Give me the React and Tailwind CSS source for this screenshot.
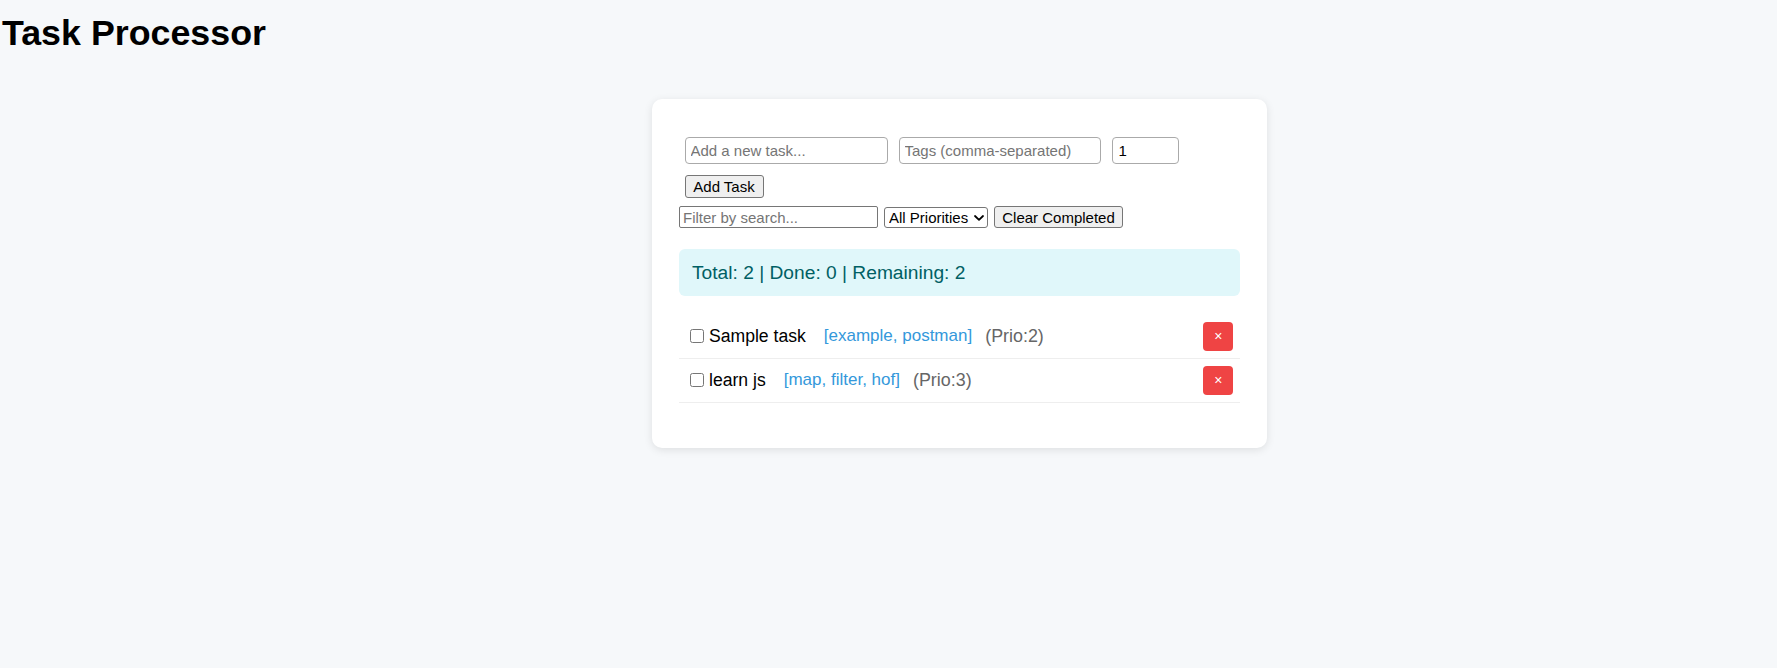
import React from "react";

function TaskRow({ title, tags, prio }) {
  return (
    <div className="flex h-[44px] items-center border-b border-[#eeeeee] pl-[11px] pr-[6.7px]">
      <input type="checkbox" className="m-0 mr-[5px] h-[14px] w-[14px]" />
      <span className="text-[17.6px] leading-[normal] text-black">{title}</span>
      <span className="ml-[18px] text-[17px] leading-[normal] text-[#3498db]">{tags}</span>
      <span className="ml-[13px] text-[17.9px] leading-[normal] text-[#666666]">{prio}</span>
      <button className="ml-auto flex h-[29px] w-[30px] items-center justify-center rounded-[4px] bg-[#ef4444] text-[14px] leading-[normal] text-white">
        ×
      </button>
    </div>
  );
}

export default function App() {
  return (
    <div className="min-h-screen bg-[#f6f8fa] pt-[13px] font-['Liberation_Sans',Arial,sans-serif] leading-[normal] text-black">
      <h1 className="pl-[2px] text-[35.8px] font-bold leading-[normal]">Task Processor</h1>
      <div className="mt-[45px] ml-[652px] w-[615px] rounded-[10px] bg-white px-[27px] pt-[32px] pb-[45px] shadow-[0_2px_8px_rgba(0,0,0,0.1)]">
        <form className="flex flex-wrap" onSubmit={(e) => e.preventDefault()}>
          <input
            placeholder="Add a new task..."
            className="m-[5.5px] h-[27px] w-[203px] rounded-[4px] border border-[#aaaaaa] px-[5px] text-[15px] outline-none placeholder:text-[#757575]"
          />
          <input
            placeholder="Tags (comma-separated)"
            className="m-[5.5px] h-[27px] w-[202px] rounded-[4px] border border-[#aaaaaa] px-[5px] text-[15px] outline-none placeholder:text-[#757575]"
          />
          <input
            type="text"
            defaultValue="1"
            className="m-[5.5px] h-[27px] w-[67px] rounded-[4px] border border-[#aaaaaa] px-[6px] text-[15px] outline-none"
          />
          <button
            type="submit"
            className="m-[5.5px] flex h-[23px] w-[79px] items-center justify-center rounded-[3px] border border-[#767676] bg-[#efefef] text-[15px]"
          >
            Add Task
          </button>
        </form>

        <div className="mt-[3px] flex h-[22px] items-center gap-[6px]">
          <input
            placeholder="Filter by search..."
            className="h-[22px] w-[199px] rounded-[2px] border border-[#767676] px-[3px] text-[15px] outline-none placeholder:text-[#757575]"
          />
          <div className="relative h-[21px] w-[104px]">
            <select className="h-[21px] w-[104px] appearance-none rounded-[3px] border border-[#767676] bg-white pl-[4px] text-[15px] leading-none outline-none">
              <option>All Priorities</option>
              <option>1</option>
              <option>2</option>
              <option>3</option>
            </select>
            <svg
              className="pointer-events-none absolute top-[8px] right-[4px]"
              width="10"
              height="6"
              viewBox="0 0 10 6"
              fill="none"
            >
              <path d="M1 1 L5 4.8 L9 1" stroke="#000" strokeWidth="1.8" strokeLinecap="round" strokeLinejoin="round" />
            </svg>
          </div>
          <button className="flex h-[22px] w-[129px] items-center justify-center rounded-[3px] border border-[#767676] bg-[#efefef] text-[15px]">
            Clear Completed
          </button>
        </div>

        <div className="mt-[21px] rounded-[6px] bg-[#e0f7fa] py-[12.5px] pl-[13px] text-[19.2px] leading-[normal] text-[#006064]">
          Total: 2 | Done: 0 | Remaining: 2
        </div>

        <div className="mt-[18.5px]">
          <TaskRow title="Sample task" tags="[example, postman]" prio="(Prio:2)" />
          <TaskRow title="learn js" tags="[map, filter, hof]" prio="(Prio:3)" />
        </div>
      </div>
    </div>
  );
}
